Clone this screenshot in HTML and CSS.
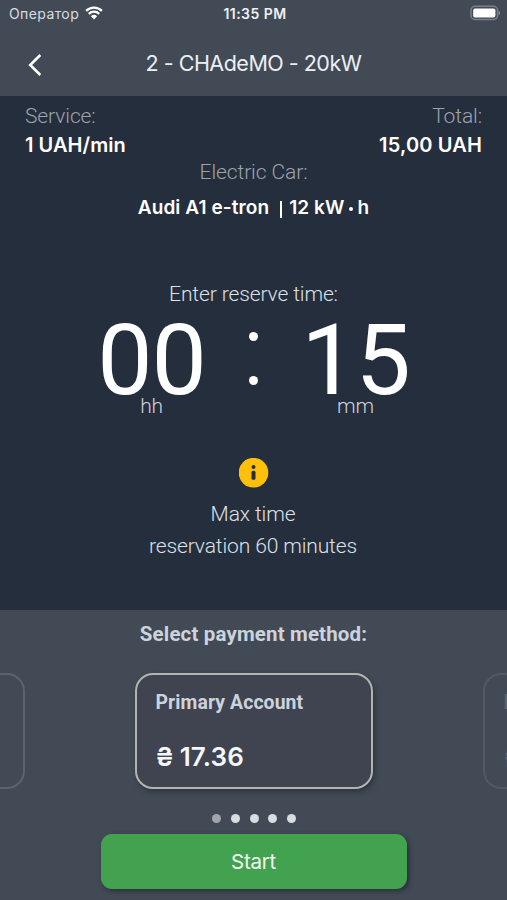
FILE: index.html
```html
<!DOCTYPE html>
<html lang="en">
<head>
<meta charset="utf-8">
<title>Reserve charger</title>
<link rel="stylesheet" href="styles.css">
</head>
<body>
<main class="screen">
  <header class="top">
    <div class="status">
      <div class="carrier"><span class="carrier-name">Оператор</span>
        <svg class="wifi" viewBox="0 0 18 14" width="18" height="14"><path d="M1.1 4.9a11.4 11.4 0 0 1 15.8 0M3.8 7.8a7.5 7.5 0 0 1 10.4 0" fill="none" stroke="#fff" stroke-width="2.3"/><path d="M5.9 10.2a4.5 4.5 0 0 1 6.2 0L9 13.6z" fill="#fff"/></svg>
      </div>
      <span class="clock">11:35 PM</span>
      <svg class="battery" viewBox="0 0 31 16" width="31" height="16"><rect x="1" y="1.3" width="26.5" height="13.2" rx="4" fill="none" stroke="#7b8087" stroke-width="1.5"/><rect x="3.2" y="3.4" width="22.2" height="9.2" rx="1.8" fill="#fff"/><path d="M28.7 5.5q3 2.4 0 5z" fill="#8c9096"/></svg>
    </div>
    <div class="nav">
      <svg class="back" viewBox="0 0 14 24" width="14" height="24"><path d="M12.3 2 2.2 12l10.1 10" fill="none" stroke="#fff" stroke-width="2.6"/></svg>
      <h1 class="title">2 - CHAdeMO - 20kW</h1>
    </div>
  </header>
  <section class="details">
    <div class="summary">
      <div><div class="label service">Service:</div><div class="value rate">1 UAH/min</div></div>
      <div class="right"><div class="label total">Total:</div><div class="value amount">15,00 UAH</div></div>
    </div>
    <div class="label car-label">Electric Car:</div>
    <div class="car"><span class="model">Audi A1 e-tron</span><i class="bar"></i><span class="power">12 kW</span><i class="mid"></i><span>h</span></div>
    <div class="prompt">Enter reserve time:</div>
    <div class="time">
      <div class="unit"><div class="digits">00</div><div class="caption">hh</div></div>
      <div class="colon"><i></i><i></i></div>
      <div class="unit"><div class="digits">15</div><div class="caption">mm</div></div>
    </div>
    <svg class="info" viewBox="0 0 30 30" width="30" height="30"><circle cx="14.5" cy="14.7" r="14.8" fill="#fec00b"/><circle cx="14.5" cy="9" r="2" fill="#252e3d"/><rect x="12.5" y="12.8" width="4" height="9" rx="1.5" fill="#252e3d"/></svg>
    <div class="note"><div>Max time</div><div>reservation 60 minutes</div></div>
  </section>
  <section class="payment">
    <h2 class="pay-title">Select payment method:</h2>
    <div class="cards">
      <div class="card dim"></div>
      <div class="card active"><div class="account">Primary Account</div><div class="balance">₴ 17.36</div></div>
      <div class="card dim faint"><div class="account">Primary Account</div><div class="balance">₴ 17.36</div></div>
    </div>
    <div class="dots"><i class="current"></i><i></i><i></i><i></i><i></i></div>
    <button class="start">Start</button>
  </section>
</main>
</body>
</html>
```
FILE: styles.css
```css
* { box-sizing: border-box; }
body { margin: 0; background: #252e3d; }
svg { display: block; }
.screen { width: 507px; height: 900px; overflow: hidden; display: flex; flex-direction: column; background: #252e3d; color: #fff; font-family: Inter, sans-serif; }
.top { height: 96px; background: #424a56; flex: none; }
.status { height: 28px; display: grid; grid-template-columns: 1fr auto 1fr; align-items: center; padding: 0 6px 0 9px; font-size: 14px; line-height: 28px; }
.carrier { display: flex; align-items: center; gap: 6px; color: #d9dde3; }
.carrier-name { letter-spacing: .4px; }
.wifi { margin-top: -2px; }
.clock { font-size: 14px; letter-spacing: .45px; font-weight: 600; color: #eef0f4; }
.battery { justify-self: end; margin-top: -2px; }
.nav { height: 68px; display: grid; grid-template-columns: 60px 1fr 60px; align-items: center; }
.back { margin: 6px 0 0 28px; }
.title { margin: 2px 0 0; text-align: center; font-size: 21.5px; font-weight: 400; line-height: 28px; letter-spacing: -.5px; color: #eceff5; white-space: nowrap; }
.details { height: 514px; flex: none; padding-top: 6px; text-align: center; }
.summary { height: 56px; display: flex; justify-content: space-between; padding: 0 25px; text-align: left; }
.right { text-align: right; }
.label { font: 300 21px/28px Roboto, sans-serif; letter-spacing: -.1px; color: #9da3ad; }
.value { font-size: 20px; font-weight: 600; line-height: 31px; letter-spacing: .05px; }
.amount { letter-spacing: .15px; }
.car { margin-top: 8px; display: flex; justify-content: center; align-items: center; font-size: 19px; font-weight: 600; line-height: 28px; letter-spacing: .1px; }
.bar { width: 2px; height: 17px; margin: 3px 7px 0 11px; background: #fff; }
.mid { width: 4px; height: 4px; border-radius: 50%; background: #fff; margin: 2px 5px 0 4px; }
.prompt { margin-top: 58px; font: 300 21px/28px Roboto, sans-serif; letter-spacing: -.12px; color: #dde1e8; }
.time { height: 112px; display: flex; justify-content: center; }
.unit { width: 140px; }
.digits { font: 400 98.5px/106px Roboto, sans-serif; letter-spacing: -1px; height: 98px; }
.caption { margin-top: -14px; font: 300 21px/28px Roboto, sans-serif; letter-spacing: -.2px; color: #ced3dc; }
.colon { width: 64px; padding: 24px 1px 0 0; display: flex; flex-direction: column; align-items: center; gap: 35px; }
.colon i { width: 9px; height: 9px; border-radius: 50%; background: #fff; }
.info { margin: 38px auto 0; }
.note { margin-top: 10px; padding-right: 1px; font: 300 21px/32px Roboto, sans-serif; letter-spacing: -.12px; color: #dde1e8; }
.payment { height: 290px; flex: none; background: #424a56; display: flex; flex-direction: column; align-items: center; }
.pay-title { margin: 10px 0 0; font: 700 20.5px/28px Roboto, sans-serif; letter-spacing: .15px; color: #cdd3dd; white-space: nowrap; }
.cards { margin-top: 25px; display: flex; justify-content: center; gap: 110px; }
.card { width: 238px; height: 116px; flex: none; border: 2px solid #b1b5b0; border-radius: 18px; padding: 14px 19px; text-align: left; background: #3f4450; white-space: nowrap; overflow: hidden; }
.active { box-shadow: 2px 3px 5px rgba(30,34,42,.5); }
.dim { background: transparent; border-color: #5b636e; }
.faint { border-color: #515965; }
.account { font: 700 19.4px/28px Roboto, sans-serif; letter-spacing: .1px; color: #cdd3dd; }
.balance { margin-top: 23px; font-size: 26px; font-weight: 600; line-height: 34px; word-spacing: -1px; letter-spacing: .15px; color: #f3f6fb; }
.faint .account, .faint .balance { color: #5b636f; }
.dots { margin: 25px 0 0 1px; display: flex; gap: 9.6px; }
.dots i { width: 9px; height: 9px; border-radius: 50%; background: #d9dde2; }
.dots .current { background: #a2a6ac; }
.start { margin: 11px 0 0; width: 306px; height: 55px; border: 0; border-radius: 11px; background: #42a24f; color: #f2fff3; font: 400 20.5px/56px Inter, sans-serif; letter-spacing: -.25px; padding: 0; box-shadow: 2px 2px 5px rgba(25,29,38,.6); }
```
